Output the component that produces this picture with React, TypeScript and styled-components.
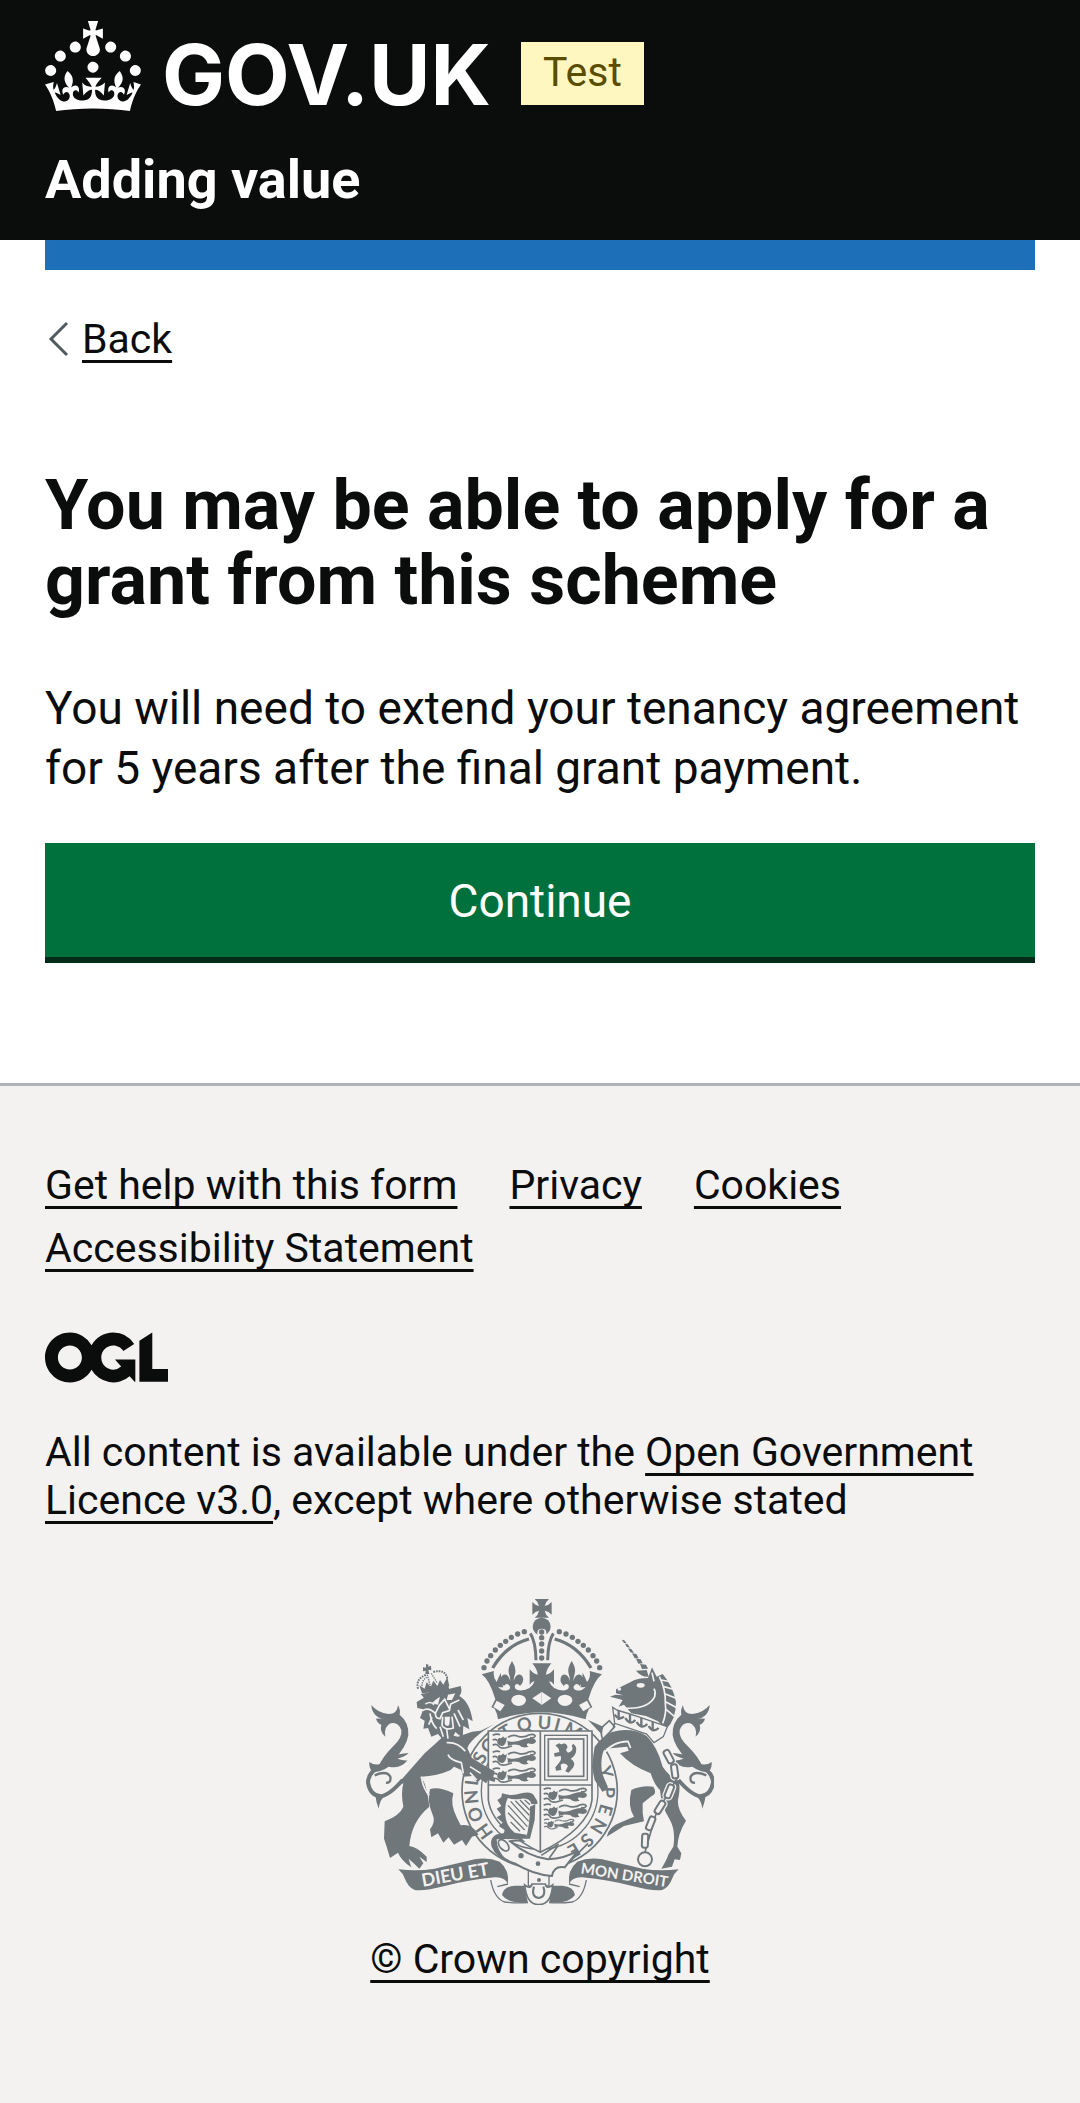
import React from "react";
import styled, { createGlobalStyle } from "styled-components";

const ink = "#0b0c0c";
const paper = "#f3f2f1";
const heraldic = "#6f777b";
const sans = `Roboto, "Liberation Sans", Arial, sans-serif`;

const GlobalStyle = createGlobalStyle`
  *, *::before, *::after { box-sizing: border-box; }
  html { background: ${paper}; }
  body { margin: 0; background: #fff; color: ${ink}; font-family: ${sans}; }
`;

const Container = styled.div`
  margin: 0 45px;
`;

const Link = styled.a`
  color: ${ink};
  text-decoration: underline;
  text-decoration-thickness: 3px;
  text-underline-offset: 7px;
  text-decoration-skip-ink: none;
`;

const Header = styled.header`
  background: ${ink};
  color: #fff;
`;

const HeaderInner = styled(Container)`
  display: flex;
  flex-direction: column;
  align-items: flex-start;
  gap: 39px;
  padding: 21px 0 30px;
`;

const LogoRow = styled.div`
  display: flex;
  align-items: flex-end;
  gap: 30px;
`;

const HomeLink = styled.a`
  display: flex;
  align-items: flex-end;
  gap: 21px;
  color: #fff;
  text-decoration: none;
`;

const Wordmark = styled.span`
  font-family: Inter, "Liberation Sans", sans-serif;
  font-size: 84px;
  font-weight: 700;
  line-height: 72px;
`;

const PhaseTag = styled.strong`
  margin-bottom: 6px;
  padding: 0 22px 3px;
  background: #fff7bf;
  color: #594d00;
  font-size: 41px;
  font-weight: 400;
  line-height: 60px;
`;

const ServiceName = styled.a`
  color: #fff;
  font-size: 54px;
  font-weight: 700;
  line-height: 60px;
  text-decoration: none;
`;

const BrandBar = styled(Container)`
  height: 30px;
  background: #1d70b8;
`;

const Page = styled(Container)`
  padding: 45px 0 126px;
`;

const BackRow = styled.nav`
  display: flex;
  align-items: center;
  gap: 12px;
  margin-bottom: 105px;
  font-size: 41px;
  line-height: 48px;
`;

const Heading = styled.h1`
  margin: 0 0 60px;
  font-size: 70px;
  font-weight: 700;
  line-height: 75px;
`;

const Body = styled.p`
  margin: 0 0 45px;
  font-size: 46px;
  line-height: 60px;
`;

const Button = styled.button`
  display: block;
  width: 100%;
  padding: 28px 24px 26px;
  border: 0;
  background: #00703c;
  box-shadow: 0 6px 0 #002d18;
  color: #fff;
  font-family: inherit;
  font-size: 46px;
  line-height: 60px;
  text-align: center;
  cursor: pointer;
`;

const Footer = styled.footer`
  border-top: 3px solid #b1b4b6;
  background: ${paper};
  font-size: 41px;
  line-height: 48px;
`;

const FooterInner = styled(Container)`
  padding: 75px 0 120px;
`;

const FooterLinks = styled.ul`
  display: flex;
  flex-wrap: wrap;
  gap: 15px 52px;
  margin: 0 0 60px;
  padding: 0;
  list-style: none;
`;

const OglMark = styled.svg`
  display: block;
  margin-bottom: 45px;
`;

const Licence = styled.p`
  margin: 0 0 75px;
`;

const Copyright = styled.div`
  display: flex;
  flex-direction: column;
  align-items: center;
  gap: 30px;
`;

const Crown = () => (
  <svg width="96" height="90" viewBox="0 0 32 30" fill="#fff" aria-hidden="true">
    <path d="M22.6 10.4c-1 .4-2-.1-2.4-1-.4-.9.1-2 1-2.4.9-.4 2 .1 2.4 1s-.1 2-1 2.4m-5.9 6.7c-.9.4-2-.1-2.4-1-.4-.9.1-2 1-2.4.9-.4 2 .1 2.4 1s-.1 2-1 2.4m10.8-3.7c-1 .4-2-.1-2.4-1-.4-.9.1-2 1-2.4.9-.4 2 .1 2.4 1s0 2-1 2.4m3.3 4.8c-1 .4-2-.1-2.4-1-.4-.9.1-2 1-2.4.9-.4 2 .1 2.4 1s-.1 2-1 2.4M17 4.7l2.3 1.2V2.5l-2.3.7-.2-.2.9-3h-3.4l.9 3-.2.2c-.1.1-2.3-.7-2.3-.7v3.4L15 4.7c.1.1.1.2.2.2l-1.3 4c-.1.2-.1.4-.1.6 0 1.1.8 2 1.9 2.2h.7c1-.2 1.9-1.1 1.9-2.1 0-.2 0-.4-.1-.6l-1.3-4c-.1-.2 0-.2.1-.3m-7.6 5.7c.9.4 2-.1 2.4-1 .4-.9-.1-2-1-2.4-.9-.4-2 .1-2.4 1s0 2 1 2.4m-5 3c.9.4 2-.1 2.4-1 .4-.9-.1-2-1-2.4-.9-.4-2 .1-2.4 1s.1 2 1 2.4m-3.2 4.8c.9.4 2-.1 2.4-1 .4-.9-.1-2-1-2.4-.9-.4-2 .1-2.4 1s0 2 1 2.4m14.8 11c4.4 0 8.6.3 12.3.8 1.1-4.5 2.4-7 3.7-8.8l-2.5-.9c.2 1.3.3 1.9 0 2.7-.4-.4-.8-1.1-1.1-2.3l-1.2 4c.7-.5 1.3-.8 2-.9-1.1 2.5-2.6 3.1-3.5 3-1.1-.2-1.7-1.2-1.5-2.1.3-1.2 1.5-1.5 2.1-.1 1.1-2.3-.8-3-2-2.3 1.9-1.9 2.1-3.5.6-5.6-2.1 1.6-2.1 3.2-1.2 5.5-1.2-1.4-3.2-.6-2.5 1.6.9-1.4 2.1-.5 1.9.8-.2 1.1-1.7 2.1-3.5 1.9-2.7-.2-2.9-2.1-2.9-3.6.7-.1 1.9.5 2.9 1.9l.4-4.3c-1.1 1.1-2.1 1.4-3.2 1.4.4-1.2 2.1-3 2.1-3h-5.4s1.7 1.9 2.1 3c-1.1 0-2.1-.2-3.2-1.4l.4 4.3c1-1.4 2.2-2 2.9-1.9-.1 1.5-.2 3.4-2.9 3.6-1.9.2-3.4-.8-3.5-1.9-.2-1.3 1-2.2 1.9-.8.7-2.3-1.2-3-2.5-1.6.9-2.2.9-3.9-1.2-5.5-1.5 2-1.3 3.7.6 5.6-1.2-.7-3.1 0-2 2.3.6-1.4 1.8-1.1 2.1.1.2.9-.3 1.9-1.5 2.1-.9.2-2.4-.5-3.5-3 .6 0 1.2.3 2 .9l-1.2-4c-.3 1.1-.7 1.9-1.1 2.3-.3-.8-.2-1.4 0-2.7l-2.9.9C1.3 23 2.6 25.5 3.7 30c3.7-.5 7.9-.8 12.3-.8" />
  </svg>
);

const BackChevron = () => (
  <svg width="25" height="36" viewBox="0 0 25 36" fill="none" stroke="#505a5f" strokeWidth="3" aria-hidden="true">
    <path d="M22 2L6 18L22 34" />
  </svg>
);

const OglLogo = () => (
  <OglMark width="123" height="51" viewBox="0 0 483.2 195.7" fill={ink} role="img" aria-label="Open Government Licence">
    <path d="M421.5 142.8V.1l-50.7 32.3v161.1h112.4v-50.7zm-122.3-9.6A47.12 47.12 0 0 1 221 97.8c0-26 21.1-47.1 47.1-47.1 16.7 0 31.4 8.7 39.7 21.8l42.7-27.2A97.63 97.63 0 0 0 268.1 0c-36.5 0-68.3 20.1-85.1 49.7A98 98 0 0 0 97.8 0C43.9 0 0 43.9 0 97.8s43.9 97.8 97.8 97.8c36.5 0 68.3-20.1 85.1-49.7a97.76 97.76 0 0 0 149.6 25.4l19.4 22.2h3v-87.8h-80l24.3 27.5zM97.8 145c-26 0-47.1-21.1-47.1-47.1s21.1-47.1 47.1-47.1 47.1 21.1 47.1 47.1S123.8 145 97.8 145" />
  </OglMark>
);

/* Letters of the garter motto that stay visible, with their bearing round the belt. */
const garterLetters: [string, number][] = [
  ["H", -126], ["O", -110], ["N", -95], ["I", -83], ["S", -61], ["O", -48], ["T", -30],
  ["Q", -13], ["U", 4], ["I", 15], ["M", 29], ["Y", 74], ["P", 91], ["E", 106], ["N", 121], ["S", 136], ["E", 150],
];

const crownPearls = [[529, 155], [509, 162], [490, 172], [473, 184], [457, 196], [442, 210], [428, 227], [417, 243], [408, 263]];

const CrownHalf = () => (
  <g>
    {crownPearls.map(([x, y]) => <circle key={x} cx={x} cy={y} r="8" />)}
    <path d="M434 264Q475 195 543 177" fill="none" stroke={heraldic} strokeWidth="10" />
    <path d="M547 160Q563 185 564 241" fill="none" stroke={heraldic} strokeWidth="9" />
    <path d="M401 283L438 273Q434 292 446 306Q451 292 459 278Q458 300 466 322Q456 322 450 320Q464 336 480 330Q492 324 482 314Q474 308 468 318Q452 302 462 287Q478 276 487 303Q487 292 483 282Q478 264 492 243Q506 264 501 282Q497 292 497 303Q506 276 522 287Q532 302 516 318Q510 308 502 314Q496 326 512 331Q548 334 560 304Q552 304 545 314V268Q556 282 569 284Q568 268 553 250H582V397Q515 398 450 418Q448 400 440 386L430 382L442 358Q425 300 401 283Z" />
    <g fill={paper}>
      <ellipse cx="512" cy="361" rx="22" ry="17" />
      <path d="M446 362L470 375L457 394L436 381Z" />
      <path d="M582 335L553 355L582 375Z" />
    </g>
  </g>
);

const PassantLion = ({ x, y }: { x: number; y: number }) => (
  <g transform={`translate(${x} ${y})`}>
    <path d="M20 13Q12 18 14 30Q20 40 30 38Q42 32 42 10Q36 18 31 9Q26 18 20 13Z" />
    <path d="M44 22Q66 30 92 18Q126 8 130 24Q126 36 106 30Q98 34 108 40Q88 46 80 36Q62 30 46 38Z" />
    <g fill="none" stroke={heraldic} strokeWidth="5">
      <path d="M0 6Q12 0 22 4M0 20Q8 16 14 22M0 36Q10 30 18 38Q22 46 38 44L58 38" />
      <path d="M46 12Q60 2 76 9Q96 14 108 5Q124 0 128 8Q124 16 112 13" />
    </g>
  </g>
);

/* The scrolling tail shared by both supporters. */
const Tail = () => (
  <g>
    <path d="M70 375Q88 398 122 402Q148 402 150 376Q158 388 155 404Q184 428 181 466Q176 500 136 542L112 552Q100 560 90 562Q104 530 134 500Q164 474 160 450Q150 424 128 430Q106 440 112 470Q94 454 100 434Q88 430 84 416Q96 414 108 418Q72 410 70 375Z" />
    <path d="M64 546Q84 560 104 548Q120 524 182 519Q172 530 148 536Q164 542 178 541Q160 568 122 560Q96 578 72 576Q62 560 64 546Z" />
    <path d="M104 556Q60 574 60 608Q66 646 98 649Q124 646 164 600" fill="none" stroke={heraldic} strokeWidth="12" />
    <path d="M80 586Q116 570 127 590Q130 610 114 608" fill="none" stroke={heraldic} strokeWidth="7" />
    <path d="M82 646L106 652Q94 666 92 686Q84 666 82 646Z" />
  </g>
);

const Lion = () => (
  <g>
    <path d="M293 462L330 470L372 455L398 452Q366 476 358 505L372 534Q400 552 440 574L436 590Q444 596 440 606L420 600L414 610L398 598L388 608L374 588L346 590L340 570L318 560L308 570Q268 588 220 590Q238 620 244 680Q190 724 184 798Q206 800 236 830L236 846L214 830L226 850L214 866Q194 846 182 836Q186 850 190 862Q160 842 150 818L126 834L116 800L108 776L110 724Q156 706 166 680Q158 640 166 610L140 622L230 520Q262 492 293 462Z" />
    <path d="M246 628Q270 618 316 640Q306 672 326 712L338 736Q372 730 392 764L372 770L354 798L342 780L318 794L302 772L286 788L270 760L250 772L246 748Q264 724 254 704Q236 664 246 628Z" />
    <path d="M206 366L226 354L290 330L338 318Q344 336 334 348Q366 366 374 424L358 414L364 448L346 438L344 474L322 456L312 478L292 488L270 462L250 470L240 444L226 446L230 422L216 414L226 388L208 384Z" />
    <g fill="none" stroke={paper} strokeWidth="5">
      <path d="M224 392Q240 380 262 400Q262 416 276 416L284 398L304 392L308 372L334 360M262 400L274 376L290 358L306 390M232 372Q250 362 258 374M246 400Q250 430 266 446M284 410L282 436Q292 452 316 444L312 410M330 390L346 420M318 400L336 440M252 412L242 434M276 440L286 470M296 448L300 476" />
      <path d="M296 488Q330 486 352 514M220 590Q226 628 244 646M300 524Q306 540 340 548L346 580M366 560L398 580M366 578L386 600" />
    </g>
    <g fill={paper}>
      <path d="M262 360L276 350L270 374L252 370ZM300 344L322 340L312 360L296 360Z" />
      <path d="M290 410H306L304 434Q296 442 290 432Z" />
    </g>
    <path d="M218 342Q260 336 300 312L304 330Q264 346 230 356Z" />
    <path d="M222 340L214 316L230 326L236 306L248 322L256 302L268 318L276 300L286 314L298 292L304 318L262 336Z" />
    <path d="M234 252L242 254L240 260L249 257L250 271L241 269L244 282H232L233 272L225 274V262L234 263Z" />
    <path d="M210 326Q202 296 236 284M256 276Q292 266 298 296" fill="none" stroke={heraldic} strokeWidth="6" strokeDasharray="5 3" />
    <path d="M238 284L248 322M250 280L268 310M222 318Q222 300 236 292" fill="none" stroke={heraldic} strokeWidth="4" strokeDasharray="4 3" />
  </g>
);

/* x, y and rotation of each link of the unicorn's chain. */
const chainLinks: [number, number, number][] = [
  [962, 530, 62], [980, 574, 82], [964, 634, 112], [936, 682, 122], [908, 730, 112], [891, 782, 92],
];

const Unicorn = () => (
  <g>
    <path d="M804 328Q824 318 848 306Q866 294 900 294L912 262L926 290L944 282Q976 320 984 366Q984 420 954 448L930 424L894 408L850 400L828 374L812 380L824 360L786 350L802 344L826 346L804 340Z" />
    <path d="M740 500Q762 470 792 456Q850 440 896 468Q928 500 944 560Q962 588 990 600Q998 616 992 650Q982 680 1014 722Q990 760 988 800L1000 820L996 840L980 838L972 860L940 866Q956 840 962 822L976 800Q984 750 964 716Q940 680 936 630Q920 616 908 580Q850 558 816 520L842 512L838 500L770 506Q756 530 762 580L780 622L764 636L740 600Q728 560 740 500Z" />
    <path d="M850 630Q880 616 916 620Q930 640 908 650L884 670Q882 700 888 724L828 738L776 770Q784 740 812 730L858 710Q838 680 850 630Z" />
    <path d="M794 382L806 390Q840 400 870 410L958 440L946 470L918 488L896 462L800 430Z" fill={paper} stroke={heraldic} strokeWidth="4" />
    <path d="M812 392V420M800 404Q812 422 828 410M846 402V430M832 414Q846 438 862 420M880 414V442M866 426Q880 450 898 432M914 426V454M902 438Q914 460 932 444" fill="none" stroke={heraldic} strokeWidth="7" />
    <g fill="none" stroke={paper} strokeWidth="5">
      <path d="M826 384Q900 390 920 350Q924 336 918 326M912 278L918 304M934 290Q954 330 952 372Q956 400 944 430M940 300L972 306M948 320L984 330M952 342L988 356M954 366L988 384M954 388L980 410" />
      <path d="M768 520Q790 486 840 484L848 504" />
      <circle cx="814" cy="327" r="3" />
    </g>
    <ellipse cx="878" cy="316" rx="12" ry="7" fill={paper} />
    <path d="M896 270L864 272Q880 292 902 290ZM876 252L894 254L900 266L882 267ZM864 236L878 238L884 250L871 251ZM852 220L865 222L872 235L860 235ZM840 205L850 207L858 219L847 217ZM831 191L839 193L846 203L836 201ZM821 179L829 181L836 190L828 189Z" />
    <path d="M764 440L784 422L800 440L784 458L764 478Q756 460 764 440ZM796 444L800 430" fill={paper} stroke={heraldic} strokeWidth="5" />
    <g fill="none" strokeWidth="14" stroke={paper}>
      {chainLinks.map(([x, y, a]) => <rect key={y} x={x - 21} y={y - 9} width="42" height="18" rx="7" transform={`rotate(${a} ${x} ${y})`} />)}
    </g>
    <path d="M950 510L990 590L924 702L891 816" fill="none" stroke={heraldic} strokeWidth="5" />
    <g fill={paper} strokeWidth="6" stroke={heraldic}>
      {chainLinks.map(([x, y, a]) => <rect key={y} x={x - 21} y={y - 9} width="42" height="18" rx="7" transform={`rotate(${a} ${x} ${y})`} />)}
      <circle cx="891" cy="838" r="21" />
    </g>
  </g>
);

const Ribbon = () => (
  <g>
    <path d="M151 868Q210 875 260 866Q330 850 380 838Q420 830 455 845Q485 870 480 912Q470 890 440 892Q360 900 290 918Q230 934 200 930Q180 922 170 895Q165 880 151 868Z" />
    <path d="M428 900Q438 955 470 966Q500 970 540 968M480 912L448 920" fill="none" stroke={heraldic} strokeWidth="4" />
    <path d="M462 945Q465 920 500 917H528L540 968Q480 972 462 945Z" />
  </g>
);

const RoyalArms = () => (
  <svg width="348" height="306" viewBox="54 57 1044 918" fill={heraldic} role="img" aria-label="Royal coat of arms">
    <Tail />
    <g transform="translate(1155 0) scale(-1 1)"><Tail /></g>

    {/* Garter */}
    <circle cx="575" cy="633" r="233" fill={paper} stroke={heraldic} strokeWidth="5" />
    <circle cx="575" cy="633" r="175" fill="none" stroke={heraldic} strokeWidth="4" />
    {garterLetters.map(([letter, bearing], i) => (
      <text key={i} x="575" y="447" textAnchor="middle" fontFamily="Lato, sans-serif" fontWeight="700" fontSize="55" transform={`rotate(${bearing} 575 633)`}>{letter}</text>
    ))}
    <path d="M346 520Q370 470 440 432L398 452Q370 456 362 470ZM720 420L766 440L760 462Z" />

    {/* Shield */}
    <path d="M421 453H732V660Q722 745 577 817Q432 745 421 660Z" fill={paper} stroke={heraldic} strokeWidth="5" />
    <path d="M577 453V815M421 615H732" stroke={heraldic} strokeWidth="5" />
    <PassantLion x={434} y={460} />
    <PassantLion x={434} y={511} />
    <PassantLion x={434} y={562} />
    <PassantLion x={587} y={622} />
    <PassantLion x={587} y={670} />
    <g transform="translate(182 251) scale(0.7 0.7)"><PassantLion x={580} y={664} /></g>
    <g fill="none" stroke={heraldic} strokeWidth="4">
      <rect x="590" y="466" width="128" height="134" />
      <rect x="601" y="477" width="106" height="112" strokeWidth="5" />
    </g>
    <path d="M622 496L634 490Q640 496 648 490Q660 494 658 504Q650 510 660 518Q672 516 674 504Q668 496 676 492Q688 500 684 516Q680 530 668 536Q684 546 676 562L662 578L652 574L660 558Q650 546 638 554L640 570L624 572L622 562L632 550Q642 540 638 528L620 530L618 520L634 516L632 506Z" />
    <path d="M462 640Q490 650 520 640Q552 632 560 650L568 664V672H550Q546 654 520 656Q496 660 480 654Q470 668 472 704Q474 738 500 758L536 764V776H510Q490 784 482 768L466 764L470 750L452 738L464 728L446 712L460 704L446 686L460 678L448 660L460 652Z" />
    <path d="M546 680L562 672L560 720L546 776H534Q546 730 546 680Z" />
    <path d="M488 664L542 724M502 662L544 706M516 660L545 690M480 676L538 740M480 698L530 750M488 726L516 754M530 660L546 674" stroke={heraldic} strokeWidth="4" />

    {/* Belt end and buckle */}
    <path d="M541 868H603V918H541Z" fill={paper} stroke={heraldic} strokeWidth="4" />
    <path d="M580 826L632 792M604 834L628 800M660 850L720 790" stroke={heraldic} strokeWidth="5" />
    <path d="M434 800Q426 766 462 764Q500 760 524 782Q500 780 486 784Q540 830 600 838Q650 836 690 812L650 862Q618 856 612 888Q556 884 500 850Q446 832 434 800Z" fill={paper} stroke={heraldic} strokeWidth="6" />
    <path d="M430 790Q428 762 470 760Q508 762 522 780Q490 776 446 778Q446 810 474 838Q436 824 430 790Z" />
    <ellipse cx="467" cy="796" rx="12" ry="20" fill={paper} stroke={heraldic} strokeWidth="5" transform="rotate(-40 467 796)" />
    <circle cx="519" cy="827" r="8" /><circle cx="570" cy="851" r="7" /><circle cx="573" cy="900" r="6" />

    <CrownHalf />
    <g transform="translate(1163 0) scale(-1 1)"><CrownHalf /></g>
    <path d="M560 57H603Q592 66 590 78Q602 76 611 66V104Q602 94 590 92Q592 104 603 113H560Q571 104 573 92Q562 94 553 104V66Q562 76 573 78Q571 66 560 57Z" />
    <circle cx="581" cy="140" r="27" />
    <path d="M568 170V156Q570 146 581 146Q594 146 595 156V170Z" fill={paper} />
    {[156, 173, 192, 213, 234].map(y => <circle key={y} cx="581" cy={y} r="8" />)}

    <Lion />
    <Unicorn />

    <Ribbon />
    <g transform="translate(1143 0) scale(-1 1)"><Ribbon /></g>
    <path d="M530 915Q548 930 552 912H592Q596 930 614 915Q610 974 572 974Q536 974 530 915Z" fill={paper} stroke={heraldic} strokeWidth="5" />
    <path d="M558 920Q548 950 572 954Q596 950 586 920" fill="none" stroke={heraldic} strokeWidth="6" />
    <g fill={paper} fontFamily="Lato, sans-serif" fontWeight="700">
      <text x="224" y="920" fontSize="54" transform="rotate(-10 224 920)">DIEU ET</text>
      <text x="697" y="880" fontSize="45" transform="rotate(9 697 880)">MON DROIT</text>
    </g>
  </svg>
);

const footerLinks = ["Get help with this form", "Privacy", "Cookies", "Accessibility Statement"];

export default function App() {
  return (
    <>
      <GlobalStyle />
      <Header>
        <HeaderInner>
          <LogoRow>
            <HomeLink href="#">
              <Crown />
              <Wordmark>GOV.UK</Wordmark>
            </HomeLink>
            <PhaseTag>Test</PhaseTag>
          </LogoRow>
          <ServiceName href="#">Adding value</ServiceName>
        </HeaderInner>
      </Header>
      <BrandBar />
      <Page as="main">
        <BackRow aria-label="Back">
          <BackChevron />
          <Link href="#">Back</Link>
        </BackRow>
        <Heading>You may be able to apply for a grant from this scheme</Heading>
        <Body>You will need to extend your tenancy agreement for 5 years after the final grant payment.</Body>
        <Button type="button">Continue</Button>
      </Page>
      <Footer>
        <FooterInner>
          <FooterLinks>
            {footerLinks.map(label => (
              <li key={label}><Link href="#">{label}</Link></li>
            ))}
          </FooterLinks>
          <OglLogo />
          <Licence>
            All content is available under the <Link href="#">Open Government Licence v3.0</Link>, except where otherwise stated
          </Licence>
          <Copyright>
            <RoyalArms />
            <Link href="#">© Crown copyright</Link>
          </Copyright>
        </FooterInner>
      </Footer>
    </>
  );
}
